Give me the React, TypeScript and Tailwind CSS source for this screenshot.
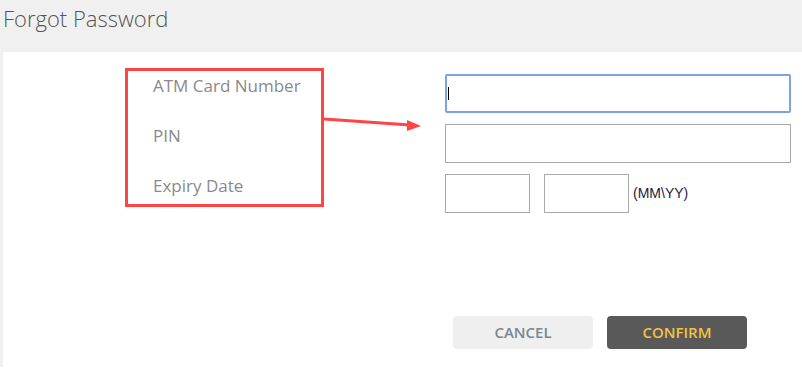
export default function App() {
  return (
    <div className="w-[802px] h-[377px] bg-white font-['Open_Sans',sans-serif]">
      <header className="h-[52px] bg-[#f0f0f0] px-[3px] pt-[3px]">
        <h1 className="text-[22px] leading-[30px] text-[#555] font-light">Forgot Password</h1>
      </header>

      <div className="flex h-[315px]">
        <div className="w-[3px] bg-[#f0f0f0]" />
        <div className="relative flex flex-1">
          {/* labels */}
          <div className="ml-[122px] mt-[16px] flex h-[139px] w-[199px] flex-col gap-[20px] border-[3px] border-[#f44] pl-[25px] text-[17px] text-[#8a8a8a]">
            <span className="h-[30px] leading-[30px]">ATM Card Number</span>
            <span className="h-[30px] leading-[30px]">PIN</span>
            <span className="h-[30px] leading-[30px]">Expiry Date</span>
          </div>

          {/* arrow annotation */}
          <svg className="absolute left-[321px] top-[60px]" width="100" height="20" viewBox="0 0 100 20">
            <line x1="0" y1="7" x2="86" y2="13" stroke="#f44" strokeWidth="3" />
            <polygon points="83,8 97,14 83,19" fill="#f44" />
          </svg>

          {/* fields */}
          <div className="ml-[121px] mt-[22px] flex w-[346px] flex-col">
            <div className="flex h-[39px] items-center rounded-[2px] border-2 border-[#7ba3e8] pl-[1px]">
              <span className="h-[13px] w-[1px] bg-black" />
            </div>
            <div className="mt-[11px] h-[39px] border border-[#a9a9a9]" />
            <div className="mt-[11px] flex items-center">
              <div className="h-[39px] w-[85px] border border-[#a9a9a9]" />
              <div className="ml-[14px] h-[39px] w-[85px] border border-[#a9a9a9]" />
              <span className="ml-[4px] font-['Liberation_Sans',sans-serif] text-[14px] text-[#1e2040]">(MM\YY)</span>
            </div>

            <div className="mt-[103px] flex gap-[14px] pl-[8px]">
              <button className="h-[33px] w-[140px] rounded-[4px] bg-[#efefef] text-[15px] font-semibold text-[#7d8690]">
                CANCEL
              </button>
              <button className="h-[33px] w-[140px] rounded-[4px] bg-[#595959] text-[15px] font-semibold text-[#f5c242]">
                CONFIRM
              </button>
            </div>
          </div>
        </div>
      </div>
    </div>
  );
}
